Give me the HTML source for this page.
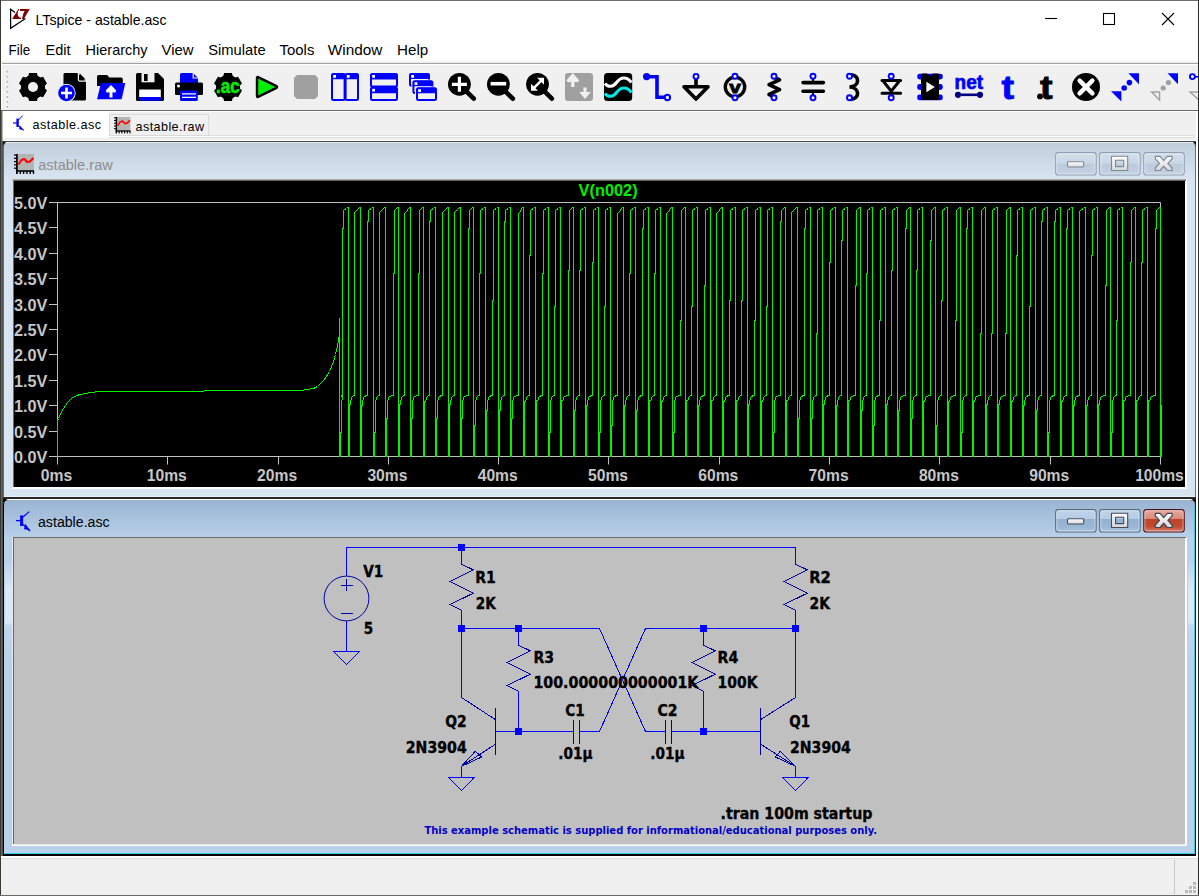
<!DOCTYPE html>
<html>
<head>
<meta charset="utf-8">
<title>LTspice - astable.asc</title>
<style>
html,body{margin:0;padding:0;}
body{width:1199px;height:896px;overflow:hidden;background:#fff;position:relative;font-family:"Liberation Sans",sans-serif;}
#app{position:absolute;left:0;top:0;width:1199px;height:896px;background:#fff;overflow:hidden;}
#app>div{position:absolute;overflow:hidden;}
svg{position:absolute;left:0;top:0;display:block;}
text{font-family:"Liberation Sans",sans-serif;}
.sch text{font-family:"DejaVu Sans Condensed","DejaVu Sans","Liberation Sans",sans-serif;font-weight:bold;fill:#000;}
#titlebar{left:0;top:0;width:1199px;height:37px;background:#fff;}
#menubar{left:0;top:37px;width:1199px;height:26px;background:#fff;}
#toolbar{left:0;top:63px;width:1199px;height:49px;background:#f0f0f0;}
#tabbar{left:0;top:112px;width:1199px;height:29px;background:#f0f0f0;}
#rawwin{left:3px;top:141px;width:1193px;height:357px;}
#ascwin{left:3px;top:499px;width:1193px;height:357px;}
#statusbar{left:0;top:856px;width:1199px;height:40px;background:#f0f0f0;}

</style>
</head>
<body>
<div id="app">
<div id="titlebar">
<svg width="1199" height="37" viewBox="0 0 1199 37">
  <!-- LT logo -->
  <path d="M15 12.4 L10.6 9.3 V28.3 L25.5 18.6" fill="none" stroke="#000" stroke-width="1.25" stroke-linejoin="miter"/>
  <path d="M12.1 18.9 L18.4 9.1 L19.6 9.1 C17.6 11.5 17 13.8 18.2 16 C18.9 17.2 20 17.7 21 17.8 L21 18.9 Z" fill="#800000"/>
  <path d="M20 9 H29.8 L23.8 18.9 H21.9 C22.6 16.6 23 13.6 24.6 10.9 H20 Z" fill="#800000"/>
  <text x="35.5" y="24.6" font-size="15" textLength="131" lengthAdjust="spacingAndGlyphs" fill="#000">LTspice - astable.asc</text>
  <!-- window controls -->
  <path d="M1045 18.5 H1057" stroke="#000" stroke-width="1.1" fill="none"/>
  <rect x="1103.5" y="13.5" width="11" height="11" fill="none" stroke="#000" stroke-width="1.1"/>
  <path d="M1162 13 L1174 25 M1174 13 L1162 25" stroke="#000" stroke-width="1.1" fill="none"/>
</svg>
</div>

<div id="menubar">
<svg width="1199" height="26" viewBox="0 37 1199 26">
  <g font-size="15" fill="#000">
  <text x="8.6" y="55.4" textLength="21.6" lengthAdjust="spacingAndGlyphs">File</text>
  <text x="45.6" y="55.4" textLength="25" lengthAdjust="spacingAndGlyphs">Edit</text>
  <text x="85.6" y="55.4" textLength="62" lengthAdjust="spacingAndGlyphs">Hierarchy</text>
  <text x="161.6" y="55.4" textLength="32" lengthAdjust="spacingAndGlyphs">View</text>
  <text x="208.2" y="55.4" textLength="57.4" lengthAdjust="spacingAndGlyphs">Simulate</text>
  <text x="279.6" y="55.4" textLength="34.8" lengthAdjust="spacingAndGlyphs">Tools</text>
  <text x="327.8" y="55.4" textLength="54.6" lengthAdjust="spacingAndGlyphs">Window</text>
  <text x="397" y="55.4" textLength="31.2" lengthAdjust="spacingAndGlyphs">Help</text>
  </g>
  <rect x="0" y="61" width="1199" height="2" fill="#f0f0f0"/>
</svg>
</div>

<div id="toolbar">
<svg width="1199" height="49" viewBox="0 63 1199 49">
<rect x="0" y="63" width="1199" height="1" fill="#a0a0a0"/>
<rect x="0" y="64" width="1199" height="1" fill="#fff"/>
<rect x="1" y="61" width="1" height="50" fill="#fff"/>
<rect x="0" y="110" width="1199" height="1" fill="#6a6a6a"/>
<rect x="0" y="111" width="1199" height="1" fill="#fff"/>
<rect x="5.4" y="69.9" width="3" height="3" fill="#fafafa"/><rect x="6.4" y="70.7" width="1.8" height="1.8" fill="#b4b4b4"/>
<rect x="5.4" y="75.0" width="3" height="3" fill="#fafafa"/><rect x="6.4" y="75.8" width="1.8" height="1.8" fill="#b4b4b4"/>
<rect x="5.4" y="80.0" width="3" height="3" fill="#fafafa"/><rect x="6.4" y="80.8" width="1.8" height="1.8" fill="#b4b4b4"/>
<rect x="5.4" y="85.1" width="3" height="3" fill="#fafafa"/><rect x="6.4" y="85.9" width="1.8" height="1.8" fill="#b4b4b4"/>
<rect x="5.4" y="90.1" width="3" height="3" fill="#fafafa"/><rect x="6.4" y="90.9" width="1.8" height="1.8" fill="#b4b4b4"/>
<rect x="5.4" y="95.2" width="3" height="3" fill="#fafafa"/><rect x="6.4" y="96.0" width="1.8" height="1.8" fill="#b4b4b4"/>
<rect x="5.4" y="100.2" width="3" height="3" fill="#fafafa"/><rect x="6.4" y="101.0" width="1.8" height="1.8" fill="#b4b4b4"/>
<rect x="5.4" y="105.2" width="3" height="3" fill="#fafafa"/><rect x="6.4" y="106.0" width="1.8" height="1.8" fill="#b4b4b4"/>
<path d="M28.30 75.90 L29.10 73.10 L36.90 73.10 L37.70 75.90 L40.26 77.38 L43.09 76.67 L46.99 83.43 L44.96 85.52 L44.96 88.48 L46.99 90.57 L43.09 97.33 L40.26 96.62 L37.70 98.10 L36.90 100.90 L29.10 100.90 L28.30 98.10 L25.74 96.62 L22.91 97.33 L19.01 90.57 L21.04 88.48 L21.04 85.52 L19.01 83.43 L22.91 76.67 L25.74 77.38 Z" fill="#000"/><circle cx="33" cy="87" r="11.7" fill="#000"/><circle cx="33" cy="87" r="5.0" fill="#f0f0f0"/>
<path d="M65 73 H77.5 L86 81.5 V99 Q86 100.5 84.5 100.5 H65 Q63.5 100.5 63.5 99 V74.5 Q63.5 73 65 73 Z" fill="#000"/>
<path d="M77.8 72.5 V79.5 Q77.8 81.8 80 81.8 H86.5 V80.6 H80 Q79 80.6 79 79.5 V72.5 Z" fill="#f0f0f0"/>
<path d="M79 73 L86 80.6 V72 H79 Z" fill="#f0f0f0"/>
<path d="M79.6 73.3 L85.6 79.6 H80.6 Q79.6 79.6 79.6 78.6 Z" fill="#000"/>
<circle cx="66.5" cy="93" r="9.2" fill="#f0f0f0"/>
<circle cx="66.5" cy="93" r="8.3" fill="#0000ff"/>
<path d="M66.5 87.5 V98.5 M61 93 H72" stroke="#fff" stroke-width="2.6" fill="none"/>
<path d="M98.5 75 H106.5 Q108 75 108.5 76.5 L109 77.5 H121 Q122.8 77.5 122.8 79.3 V86 H97 V76.5 Q97 75 98.5 75 Z" fill="#000"/>
<path d="M101 83 H125.3 L121.6 99.3 H97 Z" fill="#0000ff"/>
<path d="M111 97.5 V91 M106.8 91.6 L111 87.2 L115.2 91.6" stroke="#fff" stroke-width="3" fill="none" stroke-linejoin="miter"/>
<path d="M105.6 92.2 L111 86.4 L116.4 92.2 Z" fill="#fff"/>
<path d="M137.5 73 H158 L164 79 V99.5 Q164 101 162.5 101 H137.5 Q136 101 136 99.5 V74.5 Q136 73 137.5 73 Z" fill="#000"/>
<rect x="141.5" y="72.5" width="13" height="9.8" fill="#f0f0f0"/>
<rect x="144" y="74" width="3.6" height="7" fill="#000"/>
<rect x="139.2" y="89.5" width="21.6" height="8" fill="#fff"/>
<rect x="139.2" y="97" width="21.6" height="3.8" fill="#0000ff"/>
<path d="M181.5 73 H193 L198 78 V83 H180 V74.5 Q180 73 181.5 73 Z" fill="#0000ff"/>
<path d="M192.6 72.6 V78.6 H198.4 V77.6 H193.8 V72.6 Z" fill="#f0f0f0"/>
<path d="M176.5 82.6 H201.5 Q203 82.6 203 84.1 V93.5 Q203 95 201.5 95 H176.5 Q175 95 175 93.5 V84.1 Q175 82.6 176.5 82.6 Z" fill="#000"/>
<circle cx="178.5" cy="86" r="1.5" fill="#fff"/>
<path d="M180 90.5 H197.8 V99.5 Q197.8 101 196.3 101 H181.5 Q180 101 180 99.5 Z" fill="#0000ff"/>
<path d="M182 93.8 H196 M182 97.4 H196" stroke="#fff" stroke-width="1.2"/>
<path d="M223.30 75.90 L224.10 73.10 L231.90 73.10 L232.70 75.90 L235.26 77.38 L238.09 76.67 L241.99 83.43 L239.96 85.52 L239.96 88.48 L241.99 90.57 L238.09 97.33 L235.26 96.62 L232.70 98.10 L231.90 100.90 L224.10 100.90 L223.30 98.10 L220.74 96.62 L217.91 97.33 L214.01 90.57 L216.04 88.48 L216.04 85.52 L214.01 83.43 L217.91 76.67 L220.74 77.38 Z" fill="#000"/><circle cx="228" cy="87" r="11.7" fill="#000"/>
<text x="216" y="92.7" font-size="19.4" font-weight="bold" fill="#00f000" stroke="#00f000" stroke-width="0.5" textLength="23.6" lengthAdjust="spacingAndGlyphs">.ac</text>
<path d="M257 78 L257 96 Q257 97.5 258.5 96.7 L276.5 87.8 Q277.6 87 276.5 86.2 L258.5 77.3 Q257 76.5 257 78 Z" fill="#00ee00" stroke="#000" stroke-width="2.4" stroke-linejoin="round"/>
<path d="M297 75 H315 L318 78 V96 L315 99 H297 L294 96 V78 Z" fill="#a0a0a0"/>
<rect x="332.0" y="74.0" width="12.6" height="26" rx="1.5" fill="#f0f0f0" stroke="#0000ff" stroke-width="2"/><rect x="331.5" y="73.5" width="13.6" height="5.7" rx="1" fill="#0000ff"/><rect x="333.2" y="75" width="2.8" height="2.8" fill="#fff"/>
<rect x="345.6" y="74.0" width="12.4" height="26" rx="1.5" fill="#f0f0f0" stroke="#0000ff" stroke-width="2"/><rect x="345.1" y="73.5" width="13.4" height="5.7" rx="1" fill="#0000ff"/><rect x="346.8" y="75" width="2.8" height="2.8" fill="#fff"/>
<rect x="371.0" y="74.0" width="26" height="12.4" rx="1.5" fill="#f0f0f0" stroke="#0000ff" stroke-width="2"/><rect x="370.5" y="73.5" width="27" height="6.0" rx="1" fill="#0000ff"/><rect x="372.2" y="75" width="2.8" height="2.8" fill="#fff"/>
<rect x="371.0" y="87.8" width="26" height="12.2" rx="1.5" fill="#f0f0f0" stroke="#0000ff" stroke-width="2"/><rect x="370.5" y="87.3" width="27" height="6.0" rx="1" fill="#0000ff"/><rect x="372.2" y="88.8" width="2.8" height="2.8" fill="#fff"/>
<rect x="410.0" y="74.0" width="19" height="11.8" rx="1.5" fill="#f0f0f0" stroke="#0000ff" stroke-width="2"/><rect x="409.5" y="73.5" width="20" height="5.5" rx="1" fill="#0000ff"/><rect x="411.2" y="75" width="2.8" height="2.8" fill="#fff"/>
<rect x="411.5" y="79.6" width="22.6" height="14.6" fill="#f0f0f0"/>
<rect x="413.4" y="81.2" width="19" height="11.8" rx="1.5" fill="#f0f0f0" stroke="#0000ff" stroke-width="2"/><rect x="412.9" y="80.7" width="20" height="5.5" rx="1" fill="#0000ff"/><rect x="414.59999999999997" y="82.2" width="2.8" height="2.8" fill="#fff"/>
<rect x="415" y="86.6" width="22.6" height="14.6" fill="#f0f0f0"/>
<rect x="417.0" y="88.2" width="19" height="11.8" rx="1.5" fill="#f0f0f0" stroke="#0000ff" stroke-width="2"/><rect x="416.5" y="87.7" width="20" height="5.5" rx="1" fill="#0000ff"/><rect x="418.2" y="89.2" width="2.8" height="2.8" fill="#fff"/>
<path d="M466.4 91.3 L473.79999999999995 98.7" stroke="#000" stroke-width="4.6" stroke-linecap="round"/><circle cx="459.4" cy="84.3" r="11.4" fill="#000"/><path d="M451.9 84.3 H466.9 M459.4 76.8 V91.8" stroke="#fff" stroke-width="3.2"/>
<path d="M505.4 91.3 L512.8 98.7" stroke="#000" stroke-width="4.6" stroke-linecap="round"/><circle cx="498.4" cy="84.3" r="11.4" fill="#000"/><path d="M490.59999999999997 83.7 H506.2" stroke="#fff" stroke-width="3.6"/>
<path d="M544.5 91.3 L551.9 98.7" stroke="#000" stroke-width="4.6" stroke-linecap="round"/><circle cx="537.5" cy="84.3" r="11.4" fill="#000"/><path d="M533.5 88.3 L541.5 80.3" stroke="#fff" stroke-width="2.4"/><path d="M537.0 77.8 H544.0 V84.8 Z" fill="#fff"/><path d="M538.0 90.8 H531.0 V83.8 Z" fill="#fff"/>
<rect x="565" y="73" width="28" height="28" rx="3" fill="#a0a0a0"/>
<path d="M572.8 87 V80 M567.5 81.5 L572.8 75.5 L578.2 81.5" stroke="#f0f0f0" stroke-width="3.2" fill="none"/>
<path d="M567 82 L572.8 75 L578.6 82 Z" fill="#f0f0f0"/>
<path d="M585 87.5 V94" stroke="#f0f0f0" stroke-width="3.2" fill="none"/>
<path d="M579.2 92 L585 99 L590.8 92 Z" fill="#f0f0f0"/>
<rect x="604" y="73" width="28.2" height="28" rx="3.5" fill="#000"/>
<path d="M605 83.5 C608 87.5 613 87.5 617 82 C621 76.5 627 76.5 631.5 82.5" stroke="#fff" stroke-width="3" fill="none"/>
<path d="M605 93.5 C608 97.5 613 97.5 617 92 C621 86.5 627 86.5 631.5 92.5" stroke="#00e8e8" stroke-width="3" fill="none"/>
<path d="M646.6 76.8 H657 V97.3 H665" stroke="#0000ff" stroke-width="3.6" fill="none" stroke-linejoin="miter"/>
<circle cx="646.6" cy="76.6" r="3.6" fill="#0000ff"/>
<circle cx="667.4" cy="97.5" r="2.7" fill="#f0f0f0" stroke="#0000ff" stroke-width="2"/>
<path d="M696 79 V86" stroke="#000" stroke-width="3.6"/>
<path d="M684 86.8 H708 L696 99 Z" fill="#f0f0f0" stroke="#000" stroke-width="3.6" stroke-linejoin="round"/>
<circle cx="696" cy="76.4" r="2.5" fill="#f0f0f0" stroke="#0000ff" stroke-width="1.9"/>
<circle cx="735" cy="87" r="9.7" fill="#f0f0f0" stroke="#000" stroke-width="3.4"/>
<text x="729.2" y="92.6" font-size="17" font-weight="bold" fill="#000" stroke="#000" stroke-width="0.9" textLength="11.6" lengthAdjust="spacingAndGlyphs">v</text>
<circle cx="735" cy="76.3" r="2.5" fill="#f0f0f0" stroke="#0000ff" stroke-width="1.9"/>
<circle cx="735" cy="97.8" r="2.5" fill="#f0f0f0" stroke="#0000ff" stroke-width="1.9"/>
<path d="M775 77.6 L779.6 79.8 L769 84.6 L779.6 89.6 L769 94.4 L773 96.6" stroke="#000" stroke-width="3.6" fill="none" stroke-linejoin="round" stroke-linecap="round"/>
<circle cx="774" cy="76.3" r="2.5" fill="#f0f0f0" stroke="#0000ff" stroke-width="1.9"/>
<circle cx="774" cy="97.8" r="2.5" fill="#f0f0f0" stroke="#0000ff" stroke-width="1.9"/>
<path d="M803 82.6 H823.4 M803 91.3 H823.4" stroke="#000" stroke-width="3.6" stroke-linecap="round"/>
<path d="M813 79 V82 M813 92 V95" stroke="#000" stroke-width="2"/>
<circle cx="813" cy="76.3" r="2.5" fill="#f0f0f0" stroke="#0000ff" stroke-width="1.9"/>
<circle cx="813" cy="97.8" r="2.5" fill="#f0f0f0" stroke="#0000ff" stroke-width="1.9"/>
<path d="M851 74.8 C860 75 860 86.6 849.5 87 C860 87.4 860 99 851 99.4" stroke="#000" stroke-width="3.6" fill="none"/>
<circle cx="849.5" cy="76.3" r="2.5" fill="#f0f0f0" stroke="#0000ff" stroke-width="1.9"/>
<circle cx="849.5" cy="97.8" r="2.5" fill="#f0f0f0" stroke="#0000ff" stroke-width="1.9"/>
<path d="M882 80.6 H900.6 M882 93.2 H900.6" stroke="#000" stroke-width="3" stroke-linecap="round"/>
<path d="M883.5 81.5 L891.2 91.2 L899 81.5" stroke="#000" stroke-width="3" fill="none" stroke-linejoin="miter"/>
<circle cx="891.2" cy="76.3" r="2.5" fill="#f0f0f0" stroke="#0000ff" stroke-width="1.9"/>
<circle cx="891.2" cy="97.8" r="2.5" fill="#f0f0f0" stroke="#0000ff" stroke-width="1.9"/>
<rect x="917.2" y="73.69999999999999" width="25.6" height="5.8" rx="2.4" fill="#0000ff"/>
<rect x="917.2" y="84.1" width="25.6" height="5.8" rx="2.4" fill="#0000ff"/>
<rect x="917.2" y="94.5" width="25.6" height="5.8" rx="2.4" fill="#0000ff"/>
<path d="M922.5 73.6 H927 L930 76.2 L933 73.6 H937.5 Q939 73.6 939 75.1 V98.5 Q939 100 937.5 100 H922.5 Q921 100 921 98.5 V75.1 Q921 73.6 922.5 73.6 Z" fill="#000"/>
<path d="M926.4 81.8 L934.8 87 L926.4 92.2 Z" fill="#fff"/>
<text x="954.6" y="89.2" font-size="19.5" font-weight="bold" fill="#0000ff" stroke="#0000ff" stroke-width="0.7" textLength="28.4" lengthAdjust="spacingAndGlyphs">net</text>
<path d="M958 94.8 H980" stroke="#000080" stroke-width="2.6"/>
<circle cx="958" cy="94.8" r="3.1" fill="#000080"/><circle cx="980" cy="94.8" r="3.1" fill="#000080"/>
<text x="1001.6" y="98.8" font-size="33" font-weight="bold" fill="#0000ff" stroke="#0000ff" stroke-width="0.8" textLength="12.6" lengthAdjust="spacingAndGlyphs">t</text>
<text x="1040" y="98.8" font-size="33" font-weight="bold" fill="#000" stroke="#000" stroke-width="0.8" textLength="12.6" lengthAdjust="spacingAndGlyphs">t</text>
<circle cx="1040" cy="96.4" r="2.9" fill="#000"/>
<circle cx="1086" cy="87" r="14" fill="#000"/>
<path d="M1079.6 80.6 L1092.4 93.4 M1092.4 80.6 L1079.6 93.4" stroke="#fff" stroke-width="4.4" stroke-linecap="round"/>
<path d="M1128.4 73.3 H1139 V84.2 Z" fill="#0000ff"/>
<path d="M1111 91.2 H1121.4 V101.4 Z" fill="#0000ff"/>
<circle cx="1129.4" cy="82.6" r="2.8" fill="#0000ff"/><circle cx="1124.2" cy="88" r="2.8" fill="#0000ff"/>
<path d="M1167.6 73.3 H1178 V84.2 Z" fill="#0000ff"/>
<path d="M1151.6 92 H1159.6 V100 Z" fill="#f0f0f0" stroke="#a0a0a0" stroke-width="1.4"/>
<circle cx="1168.4" cy="82.6" r="2.6" fill="#a0a0a0"/><circle cx="1163.2" cy="88" r="2.6" fill="#a0a0a0"/>
<path d="M1195 76.8 H1199" stroke="#0000ff" stroke-width="1.6"/>
<circle cx="1192.4" cy="76.6" r="2.5" fill="#f0f0f0" stroke="#0000ff" stroke-width="1.9"/>
<path d="M1190 92 H1199 V100 Z" fill="#f0f0f0" stroke="#a0a0a0" stroke-width="1.4"/>
</svg>
</div>
<div id="tabbar">
<svg width="1199" height="29" viewBox="0 112 1199 29">
  <rect x="0" y="112" width="1199" height="29" fill="#f0f0f0"/>
  <!-- strip below tabs -->
  <rect x="3" y="135" width="1191" height="3" fill="#dcdcdc"/>
  <rect x="4" y="136" width="1189" height="1" fill="#ffffff"/>
  <rect x="2" y="140" width="1195" height="1" fill="#ffffff"/>
  <!-- selected tab -->
  <rect x="3" y="112" width="106.5" height="26" fill="#ffffff"/>
  <g stroke="#0000ff" fill="none">
    <path d="M13 123 H17" stroke-width="1.2"/>
    <path d="M17.6 118.6 V127" stroke-width="2.4"/>
    <path d="M18.6 120 L22.6 115.6" stroke-width="1"/>
    <path d="M18.6 125.6 L23.6 130.6" stroke-width="1"/>
    <path d="M20 126.6 L22.6 129.4 L19.8 128.8 Z" fill="#0000ff" stroke-width="1.1"/>
  </g>
  <text x="32.6" y="128.5" font-size="12.6" fill="#000" textLength="68.4" lengthAdjust="spacing">astable.asc</text>
  <!-- unselected tab -->
  <rect x="109.5" y="114.5" width="99" height="21" fill="#f0f0f0" stroke="#d9d9d9" stroke-width="1"/>
  <g transform="translate(114 117) scale(0.82)">
    <rect x="3.5" y="0" width="16.5" height="16.5" fill="#b4b4b4"/>
    <rect x="2" y="0" width="1.8" height="20" fill="#000"/>
    <rect x="2" y="16.2" width="18" height="1.6" fill="#000"/>
    <rect x="0" y="0.4" width="2.5" height="1.2" fill="#000"/><rect x="0" y="3.7" width="2.5" height="1.2" fill="#000"/><rect x="0" y="7" width="2.5" height="1.2" fill="#000"/><rect x="0" y="10.3" width="2.5" height="1.2" fill="#000"/><rect x="0" y="13.6" width="2.5" height="1.2" fill="#000"/>
    <rect x="5.6" y="17" width="1.4" height="3" fill="#000"/><rect x="8.9" y="17" width="1.4" height="3" fill="#000"/><rect x="12.2" y="17" width="1.4" height="3" fill="#000"/><rect x="15.5" y="17" width="1.4" height="3" fill="#000"/><rect x="18.8" y="17" width="1.4" height="3" fill="#000"/>
    <path d="M4.5 10.5 L7.5 6 L10.5 5 L13 8 L16 7.5 L19.5 4" stroke="#ff0000" stroke-width="2" fill="none" stroke-linejoin="round"/>
  </g>
  <text x="135.6" y="130.5" font-size="12.6" fill="#000" textLength="68.4" lengthAdjust="spacing">astable.raw</text>
</svg>
</div>

<div id="rawwin">
<svg width="1193" height="357" viewBox="3 141 1193 357">
<defs>
<linearGradient id="gInact" gradientUnits="userSpaceOnUse" x1="0" y1="142" x2="0" y2="180"><stop offset="0" stop-color="#bfcddb"/><stop offset="1" stop-color="#d9e5f3"/></linearGradient>
<linearGradient id="gBtnI" x1="0" y1="0" x2="0" y2="1"><stop offset="0" stop-color="#d3dfec"/><stop offset="0.48" stop-color="#c9d6e5"/><stop offset="0.5" stop-color="#bccbdc"/><stop offset="1" stop-color="#c3d1e1"/></linearGradient>
<linearGradient id="gGlyph" x1="0" y1="0" x2="0" y2="1"><stop offset="0" stop-color="#ffffff"/><stop offset="1" stop-color="#d8d8d8"/></linearGradient>
</defs>
<rect x="3" y="141" width="1193" height="357" fill="#d7e4f2"/>
<path d="M3.5 498 V147 Q3.5 141.5 9 141.5 H1190 Q1195.5 141.5 1195.5 147 V498" fill="url(#gInact)" stroke="none"/>
<rect x="3" y="180" width="1193" height="318" fill="#d7e4f2"/>
<path d="M3.5 497.5 V147 Q3.5 141.5 9 141.5 H1190 Q1195.5 141.5 1195.5 147 V497.5 Z" fill="none" stroke="#6d6d6d" stroke-width="1"/>
<rect x="6" y="142" width="1187" height="1" fill="#e6ecf5"/>
<rect x="4" y="496" width="1191" height="1" fill="#eef3fa"/>
<rect x="3" y="141" width="1193" height="1" fill="#4a4a4a"/>
<rect x="3" y="497" width="1193" height="1" fill="#262626"/>
<path d="M3 141 H8 Q3.5 142 3 147 Z" fill="#000"/><path d="M1196 141 H1191 Q1195.5 142 1196 147 Z" fill="#000"/>
<g transform="translate(14 154) scale(1.0)"><rect x="3.5" y="0" width="16.5" height="16.5" fill="#b4b4b4"/><rect x="2" y="0" width="1.8" height="20" fill="#000"/><rect x="2" y="16.2" width="18" height="1.6" fill="#000"/><rect x="0" y="0.4" width="2.5" height="1.2" fill="#000"/><rect x="0" y="3.7" width="2.5" height="1.2" fill="#000"/><rect x="0" y="7.0" width="2.5" height="1.2" fill="#000"/><rect x="0" y="10.3" width="2.5" height="1.2" fill="#000"/><rect x="0" y="13.6" width="2.5" height="1.2" fill="#000"/><rect x="5.6" y="17" width="1.4" height="3" fill="#000"/><rect x="8.9" y="17" width="1.4" height="3" fill="#000"/><rect x="12.2" y="17" width="1.4" height="3" fill="#000"/><rect x="15.5" y="17" width="1.4" height="3" fill="#000"/><rect x="18.8" y="17" width="1.4" height="3" fill="#000"/><path d="M4.5 10.5 L7.5 6 L10.5 5 L13 8 L16 7.5 L19.5 4" stroke="#ff0000" stroke-width="2" fill="none" stroke-linejoin="round"/></g>
<text x="38.2" y="170" font-size="15.4" fill="#8e8e8e" textLength="74.6" lengthAdjust="spacingAndGlyphs">astable.raw</text>
<rect x="1055.7" y="152.6" width="40.4" height="22.4" rx="2.6" fill="url(#gBtnI)" stroke="#8e9db2" stroke-width="1.1"/><rect x="1056.8" y="153.7" width="38.199999999999996" height="20.2" rx="1.6" fill="none" stroke="#ffffff" stroke-opacity="0.5" stroke-width="1"/><rect x="1067.50" y="161.70" width="16.2" height="5.3" rx="0.9" fill="url(#gGlyph)" stroke="#7d8898" stroke-width="1.1"/>
<rect x="1099.7" y="152.6" width="40.4" height="22.4" rx="2.6" fill="url(#gBtnI)" stroke="#8e9db2" stroke-width="1.1"/><rect x="1100.8" y="153.7" width="38.199999999999996" height="20.2" rx="1.6" fill="none" stroke="#ffffff" stroke-opacity="0.5" stroke-width="1"/><path d="M1111.50 156.30 H1127.70 V170.50 H1111.50 Z M1115.50 160.20 V166.60 H1123.70 V160.20 Z" fill="url(#gGlyph)" fill-rule="evenodd" stroke="#7d8898" stroke-width="1.1" stroke-linejoin="round"/>
<rect x="1143.8" y="152.6" width="40.4" height="22.4" rx="2.6" fill="url(#gBtnI)" stroke="#8e9db2" stroke-width="1.1"/><rect x="1144.8999999999999" y="153.7" width="38.199999999999996" height="20.2" rx="1.6" fill="none" stroke="#ffffff" stroke-opacity="0.5" stroke-width="1"/><path d="M1155.30 156.30 L1160.10 156.30 L1163.70 160.60 L1167.30 156.30 L1172.10 156.30 L1172.10 158.80 L1167.90 163.40 L1172.10 168.00 L1172.10 170.50 L1167.30 170.50 L1163.70 166.20 L1160.10 170.50 L1155.30 170.50 L1155.30 168.00 L1159.50 163.40 L1155.30 158.80 Z" fill="url(#gGlyph)" stroke="#7d8898" stroke-width="1.2" stroke-linejoin="round"/>
<rect x="12" y="179" width="1175" height="310" fill="#ffffff"/>
<rect x="12" y="179" width="1174" height="1" fill="#a9a9a9"/>
<rect x="12" y="180" width="1174" height="1" fill="#646464"/>
<rect x="12" y="180" width="1" height="308" fill="#dfe3e8"/>
<rect x="13" y="180" width="1" height="307" fill="#6a6a6a"/>
<rect x="14" y="181" width="1171" height="306" fill="#000"/>
<path d="M49 202.5 H1160.5 V464.5" stroke="#c0c0c0" stroke-width="1" fill="none"/>
<path d="M57.5 202.5 V464.5 M49 456.5 H1160.5" stroke="#c0c0c0" stroke-width="1" fill="none"/>
<path d="M49 431.5 H57.5" stroke="#c0c0c0" stroke-width="1"/>
<path d="M49 405.5 H57.5" stroke="#c0c0c0" stroke-width="1"/>
<path d="M49 380.5 H57.5" stroke="#c0c0c0" stroke-width="1"/>
<path d="M49 354.5 H57.5" stroke="#c0c0c0" stroke-width="1"/>
<path d="M49 329.5 H57.5" stroke="#c0c0c0" stroke-width="1"/>
<path d="M49 304.5 H57.5" stroke="#c0c0c0" stroke-width="1"/>
<path d="M49 278.5 H57.5" stroke="#c0c0c0" stroke-width="1"/>
<path d="M49 253.5 H57.5" stroke="#c0c0c0" stroke-width="1"/>
<path d="M49 227.5 H57.5" stroke="#c0c0c0" stroke-width="1"/>
<path d="M167.5 456.5 V464.5" stroke="#c0c0c0" stroke-width="1"/>
<path d="M278.5 456.5 V464.5" stroke="#c0c0c0" stroke-width="1"/>
<path d="M388.5 456.5 V464.5" stroke="#c0c0c0" stroke-width="1"/>
<path d="M498.5 456.5 V464.5" stroke="#c0c0c0" stroke-width="1"/>
<path d="M608.5 456.5 V464.5" stroke="#c0c0c0" stroke-width="1"/>
<path d="M719.5 456.5 V464.5" stroke="#c0c0c0" stroke-width="1"/>
<path d="M829.5 456.5 V464.5" stroke="#c0c0c0" stroke-width="1"/>
<path d="M939.5 456.5 V464.5" stroke="#c0c0c0" stroke-width="1"/>
<path d="M1050.5 456.5 V464.5" stroke="#c0c0c0" stroke-width="1"/>
<g font-size="16" font-weight="bold" fill="#c6c6c6">
<text x="14" y="463.0" textLength="33.4" lengthAdjust="spacingAndGlyphs">0.0V</text>
<text x="14" y="437.6" textLength="33.4" lengthAdjust="spacingAndGlyphs">0.5V</text>
<text x="14" y="412.2" textLength="33.4" lengthAdjust="spacingAndGlyphs">1.0V</text>
<text x="14" y="386.8" textLength="33.4" lengthAdjust="spacingAndGlyphs">1.5V</text>
<text x="14" y="361.4" textLength="33.4" lengthAdjust="spacingAndGlyphs">2.0V</text>
<text x="14" y="336.0" textLength="33.4" lengthAdjust="spacingAndGlyphs">2.5V</text>
<text x="14" y="310.6" textLength="33.4" lengthAdjust="spacingAndGlyphs">3.0V</text>
<text x="14" y="285.2" textLength="33.4" lengthAdjust="spacingAndGlyphs">3.5V</text>
<text x="14" y="259.8" textLength="33.4" lengthAdjust="spacingAndGlyphs">4.0V</text>
<text x="14" y="234.4" textLength="33.4" lengthAdjust="spacingAndGlyphs">4.5V</text>
<text x="14" y="209.0" textLength="33.4" lengthAdjust="spacingAndGlyphs">5.0V</text>
<text x="40.8" y="481.2" textLength="31.4" lengthAdjust="spacingAndGlyphs">0ms</text>
<text x="146.8" y="481.2" textLength="40" lengthAdjust="spacingAndGlyphs">10ms</text>
<text x="257.1" y="481.2" textLength="40" lengthAdjust="spacingAndGlyphs">20ms</text>
<text x="367.4" y="481.2" textLength="40" lengthAdjust="spacingAndGlyphs">30ms</text>
<text x="477.7" y="481.2" textLength="40" lengthAdjust="spacingAndGlyphs">40ms</text>
<text x="588.0" y="481.2" textLength="40" lengthAdjust="spacingAndGlyphs">50ms</text>
<text x="698.3" y="481.2" textLength="40" lengthAdjust="spacingAndGlyphs">60ms</text>
<text x="808.6" y="481.2" textLength="40" lengthAdjust="spacingAndGlyphs">70ms</text>
<text x="918.9" y="481.2" textLength="40" lengthAdjust="spacingAndGlyphs">80ms</text>
<text x="1029.2" y="481.2" textLength="40" lengthAdjust="spacingAndGlyphs">90ms</text>
<text x="1135.2" y="481.2" textLength="48.6" lengthAdjust="spacingAndGlyphs">100ms</text>
</g>
<text x="578.6" y="195.6" font-size="16" font-weight="bold" fill="#00f000" textLength="59" lengthAdjust="spacingAndGlyphs">V(n002)</text>
<path d="M57.5 456.5 L57.5 420.5 L58.5 418.5 L60.5 413.5 L63.5 408.5 L67.5 402.5 L71.5 398.5 L76.5 395.5 L80.5 394.5 L85.5 393.5 L90.5 392.5 L100.5 391.5 L110.5 391.5 L300.5 390.5 L307.5 389.5 L313.5 388.5 L317.5 386.5 L320.5 383.5 L323.5 380.5 L326.5 376.5 L329.5 371.5 L331.5 366.5 L333.5 361.5 L335.5 354.5 L337.5 346.5 L338.5 340.5 L339.5 333.5 L339.5 317.5 L339.5 456.5 L340.5 456.5 L340.5 432.5 L341.5 432.5 L341.5 400.5 L342.5 399.5 L342.5 397.5 L341.5 395.5 L342.5 395.5 L342.5 228.5 L343.5 228.5 L343.5 210.5 L344.5 209.5 L346.5 208.5 L347.5 207.5 L348.5 207.5 L348.5 456.5 L349.5 456.5 L349.5 404.5 L350.5 404.5 L350.5 400.5 L351.5 399.5 L351.5 397.5 L352.5 396.5 L353.5 395.5 L354.5 395.5 L354.5 212.5 L355.5 211.5 L356.5 210.5 L358.5 208.5 L359.5 207.5 L360.5 207.5 L360.5 456.5 L361.5 456.5 L361.5 405.5 L362.5 405.5 L362.5 400.5 L363.5 399.5 L363.5 397.5 L364.5 396.5 L366.5 395.5 L367.5 395.5 L367.5 221.5 L368.5 221.5 L368.5 210.5 L369.5 209.5 L371.5 208.5 L372.5 207.5 L373.5 207.5 L373.5 456.5 L374.5 456.5 L374.5 432.5 L375.5 432.5 L375.5 400.5 L376.5 399.5 L376.5 397.5 L377.5 396.5 L378.5 395.5 L379.5 395.5 L379.5 212.5 L380.5 211.5 L381.5 210.5 L383.5 208.5 L384.5 207.5 L385.5 207.5 L385.5 456.5 L386.5 456.5 L386.5 418.5 L387.5 418.5 L387.5 400.5 L388.5 399.5 L388.5 397.5 L389.5 396.5 L392.5 395.5 L393.5 395.5 L393.5 273.5 L394.5 273.5 L394.5 210.5 L395.5 209.5 L396.5 208.5 L397.5 207.5 L398.5 207.5 L398.5 456.5 L399.5 456.5 L399.5 404.5 L400.5 404.5 L400.5 400.5 L401.5 399.5 L401.5 397.5 L402.5 396.5 L403.5 395.5 L404.5 395.5 L404.5 213.5 L405.5 212.5 L406.5 211.5 L408.5 208.5 L409.5 207.5 L410.5 207.5 L410.5 456.5 L411.5 456.5 L411.5 418.5 L412.5 418.5 L412.5 400.5 L413.5 399.5 L413.5 397.5 L414.5 396.5 L417.5 395.5 L418.5 395.5 L418.5 273.5 L419.5 273.5 L419.5 210.5 L420.5 209.5 L421.5 208.5 L422.5 207.5 L423.5 207.5 L423.5 456.5 L424.5 456.5 L424.5 401.5 L425.5 401.5 L425.5 400.5 L426.5 399.5 L426.5 397.5 L427.5 396.5 L428.5 395.5 L429.5 395.5 L429.5 221.5 L430.5 221.5 L430.5 210.5 L431.5 209.5 L433.5 208.5 L434.5 207.5 L435.5 207.5 L435.5 456.5 L436.5 456.5 L436.5 418.5 L437.5 418.5 L437.5 400.5 L438.5 399.5 L438.5 397.5 L439.5 396.5 L441.5 395.5 L442.5 395.5 L442.5 212.5 L443.5 211.5 L444.5 210.5 L446.5 208.5 L447.5 207.5 L448.5 207.5 L448.5 456.5 L449.5 456.5 L449.5 404.5 L450.5 404.5 L450.5 400.5 L451.5 399.5 L451.5 397.5 L452.5 396.5 L453.5 395.5 L454.5 395.5 L454.5 212.5 L455.5 211.5 L456.5 210.5 L458.5 208.5 L459.5 207.5 L460.5 207.5 L460.5 456.5 L461.5 456.5 L461.5 418.5 L462.5 418.5 L462.5 400.5 L463.5 399.5 L463.5 397.5 L464.5 396.5 L467.5 395.5 L468.5 395.5 L468.5 228.5 L469.5 228.5 L469.5 210.5 L470.5 209.5 L471.5 208.5 L472.5 207.5 L473.5 207.5 L473.5 456.5 L474.5 456.5 L474.5 425.5 L475.5 425.5 L475.5 400.5 L476.5 399.5 L476.5 397.5 L477.5 396.5 L478.5 395.5 L479.5 395.5 L479.5 273.5 L480.5 273.5 L480.5 210.5 L481.5 209.5 L483.5 208.5 L484.5 207.5 L485.5 207.5 L485.5 456.5 L486.5 456.5 L486.5 410.5 L487.5 410.5 L487.5 400.5 L488.5 399.5 L488.5 397.5 L489.5 396.5 L491.5 395.5 L492.5 395.5 L492.5 300.5 L493.5 300.5 L493.5 210.5 L494.5 209.5 L496.5 208.5 L497.5 207.5 L498.5 207.5 L498.5 456.5 L499.5 456.5 L499.5 410.5 L500.5 410.5 L500.5 400.5 L501.5 399.5 L501.5 397.5 L502.5 396.5 L503.5 395.5 L504.5 395.5 L504.5 221.5 L505.5 221.5 L505.5 210.5 L506.5 209.5 L508.5 208.5 L509.5 207.5 L510.5 207.5 L510.5 456.5 L511.5 456.5 L511.5 418.5 L512.5 418.5 L512.5 400.5 L513.5 399.5 L513.5 397.5 L514.5 396.5 L517.5 395.5 L518.5 395.5 L518.5 213.5 L519.5 212.5 L520.5 211.5 L521.5 208.5 L522.5 207.5 L523.5 207.5 L523.5 456.5 L524.5 456.5 L524.5 401.5 L525.5 401.5 L525.5 400.5 L526.5 399.5 L526.5 397.5 L527.5 396.5 L528.5 395.5 L529.5 395.5 L529.5 255.5 L530.5 255.5 L530.5 210.5 L531.5 209.5 L533.5 208.5 L534.5 207.5 L535.5 207.5 L535.5 456.5 L536.5 456.5 L536.5 400.5 L537.5 400.5 L537.5 400.5 L538.5 399.5 L538.5 397.5 L539.5 396.5 L541.5 395.5 L542.5 395.5 L542.5 273.5 L543.5 273.5 L543.5 210.5 L544.5 209.5 L546.5 208.5 L547.5 207.5 L548.5 207.5 L548.5 456.5 L549.5 456.5 L549.5 432.5 L550.5 432.5 L550.5 400.5 L551.5 399.5 L551.5 397.5 L552.5 396.5 L553.5 395.5 L554.5 395.5 L554.5 306.5 L555.5 306.5 L555.5 210.5 L556.5 209.5 L558.5 208.5 L559.5 207.5 L560.5 207.5 L560.5 456.5 L561.5 456.5 L561.5 400.5 L562.5 400.5 L562.5 400.5 L563.5 399.5 L563.5 397.5 L564.5 396.5 L567.5 395.5 L568.5 395.5 L568.5 270.5 L569.5 270.5 L569.5 210.5 L570.5 209.5 L571.5 208.5 L572.5 207.5 L573.5 207.5 L573.5 456.5 L574.5 456.5 L574.5 410.5 L575.5 410.5 L575.5 400.5 L576.5 399.5 L576.5 397.5 L577.5 396.5 L578.5 395.5 L579.5 395.5 L579.5 270.5 L580.5 270.5 L580.5 210.5 L581.5 209.5 L583.5 208.5 L584.5 207.5 L585.5 207.5 L585.5 456.5 L586.5 456.5 L586.5 405.5 L587.5 405.5 L587.5 400.5 L588.5 399.5 L588.5 397.5 L589.5 396.5 L591.5 395.5 L592.5 395.5 L592.5 262.5 L593.5 262.5 L593.5 210.5 L594.5 209.5 L596.5 208.5 L597.5 207.5 L598.5 207.5 L598.5 456.5 L599.5 456.5 L599.5 432.5 L600.5 432.5 L600.5 400.5 L601.5 399.5 L601.5 397.5 L602.5 396.5 L603.5 395.5 L604.5 395.5 L604.5 306.5 L605.5 306.5 L605.5 210.5 L606.5 209.5 L608.5 208.5 L609.5 207.5 L610.5 207.5 L610.5 456.5 L611.5 456.5 L611.5 425.5 L612.5 425.5 L612.5 400.5 L613.5 399.5 L613.5 397.5 L614.5 396.5 L616.5 395.5 L617.5 395.5 L617.5 213.5 L618.5 212.5 L619.5 211.5 L621.5 208.5 L622.5 207.5 L623.5 207.5 L623.5 456.5 L624.5 456.5 L624.5 405.5 L625.5 405.5 L625.5 400.5 L626.5 399.5 L626.5 397.5 L627.5 396.5 L628.5 395.5 L629.5 395.5 L629.5 273.5 L630.5 273.5 L630.5 210.5 L631.5 209.5 L633.5 208.5 L634.5 207.5 L635.5 207.5 L635.5 456.5 L636.5 456.5 L636.5 410.5 L637.5 410.5 L637.5 400.5 L638.5 399.5 L638.5 397.5 L639.5 396.5 L641.5 395.5 L642.5 395.5 L642.5 228.5 L643.5 228.5 L643.5 210.5 L644.5 209.5 L646.5 208.5 L647.5 207.5 L648.5 207.5 L648.5 456.5 L649.5 456.5 L649.5 400.5 L650.5 400.5 L650.5 400.5 L651.5 399.5 L651.5 397.5 L652.5 396.5 L653.5 395.5 L654.5 395.5 L654.5 273.5 L655.5 273.5 L655.5 210.5 L656.5 209.5 L658.5 208.5 L659.5 207.5 L660.5 207.5 L660.5 456.5 L661.5 456.5 L661.5 401.5 L662.5 401.5 L662.5 400.5 L663.5 399.5 L663.5 397.5 L664.5 396.5 L665.5 395.5 L666.5 395.5 L666.5 213.5 L667.5 212.5 L668.5 211.5 L670.5 208.5 L671.5 207.5 L672.5 207.5 L672.5 456.5 L673.5 456.5 L673.5 432.5 L674.5 432.5 L674.5 400.5 L675.5 399.5 L675.5 397.5 L676.5 396.5 L679.5 395.5 L680.5 395.5 L680.5 320.5 L681.5 320.5 L681.5 210.5 L682.5 209.5 L683.5 208.5 L684.5 207.5 L685.5 207.5 L685.5 456.5 L686.5 456.5 L686.5 400.5 L687.5 400.5 L687.5 400.5 L688.5 399.5 L688.5 397.5 L689.5 396.5 L690.5 395.5 L691.5 395.5 L691.5 306.5 L692.5 306.5 L692.5 210.5 L693.5 209.5 L695.5 208.5 L696.5 207.5 L697.5 207.5 L697.5 456.5 L698.5 456.5 L698.5 405.5 L699.5 405.5 L699.5 400.5 L700.5 399.5 L700.5 397.5 L701.5 396.5 L703.5 395.5 L704.5 395.5 L704.5 285.5 L705.5 285.5 L705.5 210.5 L706.5 209.5 L708.5 208.5 L709.5 207.5 L710.5 207.5 L710.5 456.5 L711.5 456.5 L711.5 400.5 L712.5 400.5 L712.5 400.5 L713.5 399.5 L713.5 397.5 L714.5 396.5 L715.5 395.5 L716.5 395.5 L716.5 213.5 L717.5 212.5 L718.5 211.5 L720.5 208.5 L721.5 207.5 L722.5 207.5 L722.5 456.5 L723.5 456.5 L723.5 401.5 L724.5 401.5 L724.5 400.5 L725.5 399.5 L725.5 397.5 L726.5 396.5 L728.5 395.5 L729.5 395.5 L729.5 300.5 L730.5 300.5 L730.5 210.5 L731.5 209.5 L733.5 208.5 L734.5 207.5 L735.5 207.5 L735.5 456.5 L736.5 456.5 L736.5 400.5 L737.5 400.5 L737.5 400.5 L738.5 399.5 L738.5 397.5 L739.5 396.5 L740.5 395.5 L741.5 395.5 L741.5 300.5 L742.5 300.5 L742.5 210.5 L743.5 209.5 L745.5 208.5 L746.5 207.5 L747.5 207.5 L747.5 456.5 L748.5 456.5 L748.5 404.5 L749.5 404.5 L749.5 400.5 L750.5 399.5 L750.5 397.5 L751.5 396.5 L753.5 395.5 L754.5 395.5 L754.5 320.5 L755.5 320.5 L755.5 210.5 L756.5 209.5 L758.5 208.5 L759.5 207.5 L760.5 207.5 L760.5 456.5 L761.5 456.5 L761.5 401.5 L762.5 401.5 L762.5 400.5 L763.5 399.5 L763.5 397.5 L764.5 396.5 L765.5 395.5 L766.5 395.5 L766.5 306.5 L767.5 306.5 L767.5 210.5 L768.5 209.5 L770.5 208.5 L771.5 207.5 L772.5 207.5 L772.5 456.5 L773.5 456.5 L773.5 432.5 L774.5 432.5 L774.5 400.5 L775.5 399.5 L775.5 397.5 L776.5 396.5 L779.5 395.5 L780.5 395.5 L780.5 221.5 L781.5 221.5 L781.5 210.5 L782.5 209.5 L783.5 208.5 L784.5 207.5 L785.5 207.5 L785.5 456.5 L786.5 456.5 L786.5 400.5 L787.5 400.5 L787.5 400.5 L788.5 399.5 L788.5 397.5 L789.5 396.5 L790.5 395.5 L791.5 395.5 L791.5 212.5 L792.5 211.5 L793.5 210.5 L795.5 208.5 L796.5 207.5 L797.5 207.5 L797.5 456.5 L798.5 456.5 L798.5 418.5 L799.5 418.5 L799.5 400.5 L800.5 399.5 L800.5 397.5 L801.5 396.5 L803.5 395.5 L804.5 395.5 L804.5 228.5 L805.5 228.5 L805.5 210.5 L806.5 209.5 L808.5 208.5 L809.5 207.5 L810.5 207.5 L810.5 456.5 L811.5 456.5 L811.5 418.5 L812.5 418.5 L812.5 400.5 L813.5 399.5 L813.5 397.5 L814.5 396.5 L815.5 395.5 L816.5 395.5 L816.5 333.5 L817.5 333.5 L817.5 210.5 L818.5 209.5 L820.5 208.5 L821.5 207.5 L822.5 207.5 L822.5 456.5 L823.5 456.5 L823.5 404.5 L824.5 404.5 L824.5 400.5 L825.5 399.5 L825.5 397.5 L826.5 396.5 L828.5 395.5 L829.5 395.5 L829.5 262.5 L830.5 262.5 L830.5 210.5 L831.5 209.5 L833.5 208.5 L834.5 207.5 L835.5 207.5 L835.5 456.5 L836.5 456.5 L836.5 405.5 L837.5 405.5 L837.5 400.5 L838.5 399.5 L838.5 397.5 L839.5 396.5 L840.5 395.5 L841.5 395.5 L841.5 240.5 L842.5 240.5 L842.5 210.5 L843.5 209.5 L845.5 208.5 L846.5 207.5 L847.5 207.5 L847.5 456.5 L848.5 456.5 L848.5 400.5 L849.5 400.5 L849.5 400.5 L850.5 399.5 L850.5 397.5 L851.5 396.5 L854.5 395.5 L855.5 395.5 L855.5 285.5 L856.5 285.5 L856.5 210.5 L857.5 209.5 L858.5 208.5 L859.5 207.5 L860.5 207.5 L860.5 456.5 L861.5 456.5 L861.5 410.5 L862.5 410.5 L862.5 400.5 L863.5 399.5 L863.5 397.5 L864.5 396.5 L865.5 395.5 L866.5 395.5 L866.5 273.5 L867.5 273.5 L867.5 210.5 L868.5 209.5 L870.5 208.5 L871.5 207.5 L872.5 207.5 L872.5 456.5 L873.5 456.5 L873.5 425.5 L874.5 425.5 L874.5 400.5 L875.5 399.5 L875.5 397.5 L876.5 396.5 L878.5 395.5 L879.5 395.5 L879.5 320.5 L880.5 320.5 L880.5 210.5 L881.5 209.5 L883.5 208.5 L884.5 207.5 L885.5 207.5 L885.5 456.5 L886.5 456.5 L886.5 404.5 L887.5 404.5 L887.5 400.5 L888.5 399.5 L888.5 397.5 L889.5 396.5 L890.5 395.5 L891.5 395.5 L891.5 270.5 L892.5 270.5 L892.5 210.5 L893.5 209.5 L895.5 208.5 L896.5 207.5 L897.5 207.5 L897.5 456.5 L898.5 456.5 L898.5 410.5 L899.5 410.5 L899.5 400.5 L900.5 399.5 L900.5 397.5 L901.5 396.5 L904.5 395.5 L905.5 395.5 L905.5 228.5 L906.5 228.5 L906.5 210.5 L907.5 209.5 L908.5 208.5 L909.5 207.5 L910.5 207.5 L910.5 456.5 L911.5 456.5 L911.5 418.5 L912.5 418.5 L912.5 400.5 L913.5 399.5 L913.5 397.5 L914.5 396.5 L915.5 395.5 L916.5 395.5 L916.5 270.5 L917.5 270.5 L917.5 210.5 L918.5 209.5 L920.5 208.5 L921.5 207.5 L922.5 207.5 L922.5 456.5 L923.5 456.5 L923.5 401.5 L924.5 401.5 L924.5 400.5 L925.5 399.5 L925.5 397.5 L926.5 396.5 L929.5 395.5 L930.5 395.5 L930.5 240.5 L931.5 240.5 L931.5 210.5 L932.5 209.5 L933.5 208.5 L934.5 207.5 L935.5 207.5 L935.5 456.5 L936.5 456.5 L936.5 425.5 L937.5 425.5 L937.5 400.5 L938.5 399.5 L938.5 397.5 L939.5 396.5 L940.5 395.5 L941.5 395.5 L941.5 300.5 L942.5 300.5 L942.5 210.5 L943.5 209.5 L945.5 208.5 L946.5 207.5 L947.5 207.5 L947.5 456.5 L948.5 456.5 L948.5 401.5 L949.5 401.5 L949.5 400.5 L950.5 399.5 L950.5 397.5 L951.5 396.5 L954.5 395.5 L955.5 395.5 L955.5 320.5 L956.5 320.5 L956.5 210.5 L957.5 209.5 L958.5 208.5 L959.5 207.5 L960.5 207.5 L960.5 456.5 L961.5 456.5 L961.5 432.5 L962.5 432.5 L962.5 400.5 L963.5 399.5 L963.5 397.5 L964.5 396.5 L965.5 395.5 L966.5 395.5 L966.5 228.5 L967.5 228.5 L967.5 210.5 L968.5 209.5 L970.5 208.5 L971.5 207.5 L972.5 207.5 L972.5 456.5 L973.5 456.5 L973.5 401.5 L974.5 401.5 L974.5 400.5 L975.5 399.5 L975.5 397.5 L976.5 396.5 L979.5 395.5 L980.5 395.5 L980.5 333.5 L981.5 333.5 L981.5 210.5 L982.5 209.5 L983.5 208.5 L984.5 207.5 L985.5 207.5 L985.5 456.5 L986.5 456.5 L986.5 404.5 L987.5 404.5 L987.5 400.5 L988.5 399.5 L988.5 397.5 L989.5 396.5 L990.5 395.5 L991.5 395.5 L991.5 333.5 L992.5 333.5 L992.5 210.5 L993.5 209.5 L995.5 208.5 L996.5 207.5 L997.5 207.5 L997.5 456.5 L998.5 456.5 L998.5 404.5 L999.5 404.5 L999.5 400.5 L1000.5 399.5 L1000.5 397.5 L1001.5 396.5 L1004.5 395.5 L1005.5 395.5 L1005.5 333.5 L1006.5 333.5 L1006.5 210.5 L1007.5 209.5 L1008.5 208.5 L1009.5 207.5 L1010.5 207.5 L1010.5 456.5 L1011.5 456.5 L1011.5 401.5 L1012.5 401.5 L1012.5 400.5 L1013.5 399.5 L1013.5 397.5 L1014.5 396.5 L1015.5 395.5 L1016.5 395.5 L1016.5 255.5 L1017.5 255.5 L1017.5 210.5 L1018.5 209.5 L1020.5 208.5 L1021.5 207.5 L1022.5 207.5 L1022.5 456.5 L1023.5 456.5 L1023.5 405.5 L1024.5 405.5 L1024.5 400.5 L1025.5 399.5 L1025.5 397.5 L1026.5 396.5 L1028.5 395.5 L1029.5 395.5 L1029.5 306.5 L1030.5 306.5 L1030.5 210.5 L1031.5 209.5 L1033.5 208.5 L1034.5 207.5 L1035.5 207.5 L1035.5 456.5 L1036.5 456.5 L1036.5 410.5 L1037.5 410.5 L1037.5 400.5 L1038.5 399.5 L1038.5 397.5 L1039.5 396.5 L1040.5 395.5 L1041.5 395.5 L1041.5 221.5 L1042.5 221.5 L1042.5 210.5 L1043.5 209.5 L1045.5 208.5 L1046.5 207.5 L1047.5 207.5 L1047.5 456.5 L1048.5 456.5 L1048.5 432.5 L1049.5 432.5 L1049.5 400.5 L1050.5 399.5 L1050.5 397.5 L1051.5 396.5 L1053.5 395.5 L1054.5 395.5 L1054.5 221.5 L1055.5 221.5 L1055.5 210.5 L1056.5 209.5 L1058.5 208.5 L1059.5 207.5 L1060.5 207.5 L1060.5 456.5 L1061.5 456.5 L1061.5 401.5 L1062.5 401.5 L1062.5 400.5 L1063.5 399.5 L1063.5 397.5 L1064.5 396.5 L1065.5 395.5 L1066.5 395.5 L1066.5 228.5 L1067.5 228.5 L1067.5 210.5 L1068.5 209.5 L1070.5 208.5 L1071.5 207.5 L1072.5 207.5 L1072.5 456.5 L1073.5 456.5 L1073.5 405.5 L1074.5 405.5 L1074.5 400.5 L1075.5 399.5 L1075.5 397.5 L1076.5 396.5 L1078.5 395.5 L1079.5 395.5 L1079.5 211.5 L1080.5 210.5 L1081.5 209.5 L1083.5 208.5 L1084.5 207.5 L1085.5 207.5 L1085.5 456.5 L1086.5 456.5 L1086.5 405.5 L1087.5 405.5 L1087.5 400.5 L1088.5 399.5 L1088.5 397.5 L1089.5 396.5 L1090.5 395.5 L1091.5 395.5 L1091.5 255.5 L1092.5 255.5 L1092.5 210.5 L1093.5 209.5 L1095.5 208.5 L1096.5 207.5 L1097.5 207.5 L1097.5 456.5 L1098.5 456.5 L1098.5 404.5 L1099.5 404.5 L1099.5 400.5 L1100.5 399.5 L1100.5 397.5 L1101.5 396.5 L1104.5 395.5 L1105.5 395.5 L1105.5 285.5 L1106.5 285.5 L1106.5 210.5 L1107.5 209.5 L1108.5 208.5 L1109.5 207.5 L1110.5 207.5 L1110.5 456.5 L1111.5 456.5 L1111.5 432.5 L1112.5 432.5 L1112.5 400.5 L1113.5 399.5 L1113.5 397.5 L1114.5 396.5 L1115.5 395.5 L1116.5 395.5 L1116.5 320.5 L1117.5 320.5 L1117.5 210.5 L1118.5 209.5 L1120.5 208.5 L1121.5 207.5 L1122.5 207.5 L1122.5 456.5 L1123.5 456.5 L1123.5 400.5 L1124.5 400.5 L1124.5 400.5 L1125.5 399.5 L1125.5 397.5 L1126.5 396.5 L1129.5 395.5 L1130.5 395.5 L1130.5 262.5 L1131.5 262.5 L1131.5 210.5 L1132.5 209.5 L1133.5 208.5 L1134.5 207.5 L1135.5 207.5 L1135.5 456.5 L1136.5 456.5 L1136.5 400.5 L1137.5 400.5 L1137.5 400.5 L1138.5 399.5 L1138.5 397.5 L1139.5 396.5 L1140.5 395.5 L1141.5 395.5 L1141.5 262.5 L1142.5 262.5 L1142.5 210.5 L1143.5 209.5 L1145.5 208.5 L1146.5 207.5 L1147.5 207.5 L1147.5 456.5 L1148.5 456.5 L1148.5 400.5 L1149.5 400.5 L1149.5 400.5 L1150.5 399.5 L1150.5 397.5 L1151.5 396.5 L1154.5 395.5 L1155.5 395.5 L1155.5 228.5 L1156.5 228.5 L1156.5 210.5 L1157.5 209.5 L1158.5 208.5 L1159.5 207.5 L1160.5 207.5 L1160.5 456.5 L1161.5 456.5 L1161.5 404.5" stroke="#00f400" stroke-width="1" fill="none" stroke-linejoin="miter" shape-rendering="crispEdges"/>
</svg></div>
<div id="ascwin">
<svg class="sch" width="1193" height="357" viewBox="3 499 1193 357">
<defs>
<linearGradient id="gAct" gradientUnits="userSpaceOnUse" x1="0" y1="500" x2="0" y2="538"><stop offset="0" stop-color="#99b4d1"/><stop offset="1" stop-color="#b9d1ea"/></linearGradient>
<linearGradient id="gBtnA" x1="0" y1="0" x2="0" y2="1"><stop offset="0" stop-color="#c0d4ea"/><stop offset="0.41" stop-color="#b6cde6"/><stop offset="0.43" stop-color="#95b1d1"/><stop offset="0.8" stop-color="#9bb7d6"/><stop offset="1" stop-color="#adc6e1"/></linearGradient>
<linearGradient id="gBtnR" x1="0" y1="0" x2="0" y2="1"><stop offset="0" stop-color="#eaa99b"/><stop offset="0.41" stop-color="#dc8a78"/><stop offset="0.43" stop-color="#bd4228"/><stop offset="0.75" stop-color="#c24a30"/><stop offset="1" stop-color="#d4826a"/></linearGradient>
<linearGradient id="gGlyph2" x1="0" y1="0" x2="0" y2="1"><stop offset="0" stop-color="#ffffff"/><stop offset="1" stop-color="#d6d6d6"/></linearGradient>
<linearGradient id="gSheen" gradientUnits="userSpaceOnUse" x1="0" y1="560" x2="0" y2="660"><stop offset="0" stop-color="#dce8f5" stop-opacity="0"/><stop offset="0.3" stop-color="#dce8f5" stop-opacity="1"/><stop offset="0.62" stop-color="#dce8f5" stop-opacity="1"/><stop offset="0.66" stop-color="#dce8f5" stop-opacity="0.25"/><stop offset="1" stop-color="#dce8f5" stop-opacity="0"/></linearGradient>
</defs>
<rect x="3" y="499" width="1193" height="357" fill="#b9d1ea"/>
<path d="M3.5 540 V505 Q3.5 499.5 9 499.5 H1190 Q1195.5 499.5 1195.5 505 V540 Z" fill="url(#gAct)"/>
<rect x="3" y="537" width="1193" height="319" fill="#b9d1ea"/>
<path d="M1194.5 505 V853.5 H4.5" fill="none" stroke="#28d0ea" stroke-width="1"/>
<path d="M3.5 855 V505 Q3.5 499.5 9 499.5 H1190 Q1195.5 499.5 1195.5 505 V854.5 H3.5" fill="none" stroke="#000" stroke-width="1"/>
<rect x="3" y="854" width="1193" height="2" fill="#000"/>
<rect x="3" y="499" width="1193" height="1" fill="#ffffff"/>
<path d="M3 499 H8 Q3.5 500 3 505 Z" fill="#000"/><path d="M1196 499 H1191 Q1195.5 500 1196 505 Z" fill="#000"/>
<rect x="5" y="560" width="7" height="100" fill="url(#gSheen)"/><rect x="1188" y="560" width="6" height="100" fill="url(#gSheen)"/>
<g transform="translate(16 511)" stroke="#0000ff" fill="none"><path d="M0 9.6 H5" stroke-width="1.3"/><path d="M5.6 4.4 V15" stroke-width="3"/><path d="M7 6 L13.2 0.6" stroke-width="1.2"/><path d="M7 13.2 L14 20" stroke-width="1.2"/><path d="M9.6 14.4 L12.8 18.6 L8.8 17.6 Z" fill="#0000ff" stroke-width="1.4"/></g>
<text x="38" y="526.8" font-size="15.4" fill="#000" style="font-family:'Liberation Sans',sans-serif;font-weight:normal" textLength="71.6" lengthAdjust="spacingAndGlyphs">astable.asc</text>
<rect x="1055.7" y="509.6" width="40.4" height="22.4" rx="2.6" fill="url(#gBtnA)" stroke="#56697f" stroke-width="1.1"/><rect x="1056.8" y="510.70000000000005" width="38.199999999999996" height="20.2" rx="1.6" fill="none" stroke="#ffffff" stroke-opacity="0.5" stroke-width="1"/><rect x="1067.50" y="518.70" width="16.2" height="5.3" rx="0.9" fill="url(#gGlyph2)" stroke="#414b5e" stroke-width="1.1"/>
<rect x="1099.7" y="509.6" width="40.4" height="22.4" rx="2.6" fill="url(#gBtnA)" stroke="#56697f" stroke-width="1.1"/><rect x="1100.8" y="510.70000000000005" width="38.199999999999996" height="20.2" rx="1.6" fill="none" stroke="#ffffff" stroke-opacity="0.5" stroke-width="1"/><path d="M1111.50 513.30 H1127.70 V527.50 H1111.50 Z M1115.50 517.20 V523.60 H1123.70 V517.20 Z" fill="url(#gGlyph2)" fill-rule="evenodd" stroke="#414b5e" stroke-width="1.1" stroke-linejoin="round"/>
<rect x="1143.8" y="509.6" width="40.4" height="22.4" rx="2.6" fill="url(#gBtnR)" stroke="#4a1020" stroke-width="1.1"/><rect x="1144.8999999999999" y="510.70000000000005" width="38.199999999999996" height="20.2" rx="1.6" fill="none" stroke="#ffffff" stroke-opacity="0.5" stroke-width="1"/><path d="M1155.30 513.30 L1160.10 513.30 L1163.70 517.60 L1167.30 513.30 L1172.10 513.30 L1172.10 515.80 L1167.90 520.40 L1172.10 525.00 L1172.10 527.50 L1167.30 527.50 L1163.70 523.20 L1160.10 527.50 L1155.30 527.50 L1155.30 525.00 L1159.50 520.40 L1155.30 515.80 Z" fill="url(#gGlyph2)" stroke="#3e4658" stroke-width="1.2" stroke-linejoin="round"/>
<rect x="12" y="537" width="1175" height="309" fill="#ffffff"/>
<rect x="14" y="844" width="1172" height="1" fill="#e6e6e6"/>
<rect x="12" y="537" width="1174" height="1" fill="#696969"/>
<rect x="12" y="537" width="1" height="308" fill="#e6ebf1"/>
<rect x="13" y="537" width="1" height="307" fill="#6a6a6a"/>
<rect x="14" y="538" width="1171" height="306" fill="#c0c0c0"/>
<path d="M346.5 576 V547.5 H795.5 V564.3" stroke="#0000ff" stroke-width="1" fill="none" shape-rendering="crispEdges"/>
<path d="M461.5 547.5 V564.3" stroke="#0000ff" stroke-width="1" fill="none" shape-rendering="crispEdges"/>
<path d="M346.5 620.8 V651.3" stroke="#0000ff" stroke-width="1" fill="none" shape-rendering="crispEdges"/>
<path d="M461.5 610 V697.5" stroke="#0000ff" stroke-width="1" fill="none" shape-rendering="crispEdges"/>
<path d="M461.5 628.5 H599.5 L645.5 731.5 H665.5" stroke="#0000ff" stroke-width="1" fill="none" shape-rendering="crispEdges"/>
<path d="M795.5 628.5 H645.5 L599.5 731.5 H579.5" stroke="#0000ff" stroke-width="1" fill="none" shape-rendering="crispEdges"/>
<path d="M518.5 628.5 V645.3 M518.5 691.3 V731.5" stroke="#0000ff" stroke-width="1" fill="none" shape-rendering="crispEdges"/>
<path d="M703.5 628.5 V645.3 M703.5 691.3 V731.5" stroke="#0000ff" stroke-width="1" fill="none" shape-rendering="crispEdges"/>
<path d="M795.5 610 V697.5" stroke="#0000ff" stroke-width="1" fill="none" shape-rendering="crispEdges"/>
<path d="M495.5 731.5 H573.5" stroke="#0000ff" stroke-width="1" fill="none" shape-rendering="crispEdges"/>
<path d="M671.5 731.5 H760.5" stroke="#0000ff" stroke-width="1" fill="none" shape-rendering="crispEdges"/>
<path d="M461.5 766.3 V777 M795.5 766.3 V777" stroke="#0000ff" stroke-width="1" fill="none" shape-rendering="crispEdges"/>
<path d="M333.3 651.3 H359.7 L346.5 664.6999999999999 Z" stroke="#0000ff" stroke-width="1" fill="none" shape-rendering="crispEdges"/>
<path d="M448.3 777 H474.7 L461.5 790.4 Z" stroke="#0000ff" stroke-width="1" fill="none" shape-rendering="crispEdges"/>
<path d="M782.3 777 H808.7 L795.5 790.4 Z" stroke="#0000ff" stroke-width="1" fill="none" shape-rendering="crispEdges"/>
<path d="M461.5 564.3 L473.3 569.8 L449.9 581.5999999999999 L473.3 593.1999999999999 L449.9 604.5999999999999 L461.5 610.3" stroke="#0000a8" stroke-width="1" fill="none" shape-rendering="crispEdges" />
<path d="M795.5 564.3 L807.3 569.8 L783.9 581.5999999999999 L807.3 593.1999999999999 L783.9 604.5999999999999 L795.5 610.3" stroke="#0000a8" stroke-width="1" fill="none" shape-rendering="crispEdges" />
<path d="M518.5 645.3 L530.3 650.8 L506.9 662.5999999999999 L530.3 674.1999999999999 L506.9 685.5999999999999 L518.5 691.3" stroke="#0000a8" stroke-width="1" fill="none" shape-rendering="crispEdges" />
<path d="M703.5 645.3 L715.3 650.8 L691.9 662.5999999999999 L715.3 674.1999999999999 L691.9 685.5999999999999 L703.5 691.3" stroke="#0000a8" stroke-width="1" fill="none" shape-rendering="crispEdges" />
<circle cx="346.5" cy="598.5" r="22.4" fill="none" stroke="#0000a8" stroke-width="1"/>
<path d="M340.5 585 H352.5 M346.5 579 V591 M340.5 613.3 H352.5" stroke="#0000a8" stroke-width="1" fill="none" shape-rendering="crispEdges" />
<path d="M573.5 720 V743.7 M579.5 720 V743.7" stroke="#0000a8" stroke-width="1" fill="none" shape-rendering="crispEdges" />
<path d="M665.5 720 V743.7 M671.5 720 V743.7" stroke="#0000a8" stroke-width="1" fill="none" shape-rendering="crispEdges" />
<path d="M495.5 708 V754.7 M461.5 697.5 L495.5 719.7 M495.5 744.2 L461.5 766.3" stroke="#0000a8" stroke-width="1" fill="none" shape-rendering="crispEdges" />
<path d="M461.5 766.3 L475.3 751.3 L481.7 757 Z" stroke="#0000a8" stroke-width="1" fill="none" shape-rendering="crispEdges" />
<path d="M760.5 708 V754.7 M795.5 697.5 L760.5 719.7 M760.5 744.2 L795.5 766.3" stroke="#0000a8" stroke-width="1" fill="none" shape-rendering="crispEdges" />
<path d="M795.5 766.3 L780.3 751.3 L775.3 757 Z" stroke="#0000a8" stroke-width="1" fill="none" shape-rendering="crispEdges" />
<rect x="458.0" y="544.0" width="7" height="7" fill="#0000ff"/>
<rect x="458.0" y="625.0" width="7" height="7" fill="#0000ff"/>
<rect x="515.0" y="625.0" width="7" height="7" fill="#0000ff"/>
<rect x="700.0" y="625.0" width="7" height="7" fill="#0000ff"/>
<rect x="792.0" y="625.0" width="7" height="7" fill="#0000ff"/>
<rect x="515.0" y="728.0" width="7" height="7" fill="#0000ff"/>
<rect x="700.0" y="728.0" width="7" height="7" fill="#0000ff"/>
<text x="363.3" y="576.7" font-size="16" textLength="20" lengthAdjust="spacingAndGlyphs" stroke="#000" stroke-width="0.35">V1</text>
<text x="363.7" y="634.3" font-size="16" textLength="9.4" lengthAdjust="spacingAndGlyphs" stroke="#000" stroke-width="0.35">5</text>
<text x="475.3" y="582.5" font-size="16" textLength="20.6" lengthAdjust="spacingAndGlyphs" stroke="#000" stroke-width="0.35">R1</text>
<text x="475.8" y="608.5" font-size="16" textLength="20" lengthAdjust="spacingAndGlyphs" stroke="#000" stroke-width="0.35">2K</text>
<text x="809.2" y="582.5" font-size="16" textLength="21.6" lengthAdjust="spacingAndGlyphs" stroke="#000" stroke-width="0.35">R2</text>
<text x="809.5" y="608.5" font-size="16" textLength="20.4" lengthAdjust="spacingAndGlyphs" stroke="#000" stroke-width="0.35">2K</text>
<text x="533.4" y="662.5" font-size="16" textLength="20.6" lengthAdjust="spacingAndGlyphs" stroke="#000" stroke-width="0.35">R3</text>
<text x="533.4" y="688.3" font-size="16" textLength="165" lengthAdjust="spacingAndGlyphs" stroke="#000" stroke-width="0.35">100.000000000001K</text>
<text x="717.5" y="662.5" font-size="16" textLength="20.8" lengthAdjust="spacingAndGlyphs" stroke="#000" stroke-width="0.35">R4</text>
<text x="717.5" y="688.3" font-size="16" textLength="40" lengthAdjust="spacingAndGlyphs" stroke="#000" stroke-width="0.35">100K</text>
<text x="445.3" y="726.7" font-size="16" textLength="21.4" lengthAdjust="spacingAndGlyphs" stroke="#000" stroke-width="0.35">Q2</text>
<text x="405.8" y="752.8" font-size="16" textLength="60.9" lengthAdjust="spacingAndGlyphs" stroke="#000" stroke-width="0.35">2N3904</text>
<text x="789.2" y="726.7" font-size="16" textLength="20.8" lengthAdjust="spacingAndGlyphs" stroke="#000" stroke-width="0.35">Q1</text>
<text x="790" y="752.8" font-size="16" textLength="60.8" lengthAdjust="spacingAndGlyphs" stroke="#000" stroke-width="0.35">2N3904</text>
<text x="565.3" y="715.8" font-size="16" textLength="19.4" lengthAdjust="spacingAndGlyphs" stroke="#000" stroke-width="0.35">C1</text>
<text x="657.5" y="715.8" font-size="16" textLength="20" lengthAdjust="spacingAndGlyphs" stroke="#000" stroke-width="0.35">C2</text>
<text x="558.3" y="759.2" font-size="16" textLength="34.2" lengthAdjust="spacingAndGlyphs" stroke="#000" stroke-width="0.35">.01µ</text>
<text x="650.3" y="759.2" font-size="16" textLength="34.2" lengthAdjust="spacingAndGlyphs" stroke="#000" stroke-width="0.35">.01µ</text>
<text x="720.6" y="818.6" font-size="16" textLength="151.8" lengthAdjust="spacingAndGlyphs" stroke="#000" stroke-width="0.35">.tran 100m startup</text>
<text x="424.4" y="833.6" font-size="11.3" style="fill:#0000c8" textLength="452.6" lengthAdjust="spacingAndGlyphs">This example schematic is supplied for informational/educational purposes only.</text>
</svg></div>
<div id="statusbar">
<svg width="1199" height="40" viewBox="0 856 1199 40">
  <rect x="0" y="856" width="1199" height="2" fill="#ffffff"/>
  <rect x="0" y="858" width="1199" height="37" fill="#f0f0f0"/>
  <rect x="1" y="858" width="1197" height="1" fill="#dcdcdc"/>
  <rect x="1174" y="860" width="1" height="34" fill="#c8c8c8"/>
  <g fill="#bababa">
    <rect x="1193" y="882" width="3" height="3"/>
    <rect x="1189" y="886" width="3" height="3"/><rect x="1193" y="886" width="3" height="3"/>
    <rect x="1185" y="890" width="3" height="3"/><rect x="1189" y="890" width="3" height="3"/><rect x="1193" y="890" width="3" height="3"/>
  </g>
</svg>
</div>

<div id="edges" style="left:0;top:0;width:1199px;height:896px;pointer-events:none;background:transparent;">
<svg width="1199" height="896" viewBox="0 0 1199 896">
  <!-- outer window border -->
  <rect x="0" y="0" width="1199" height="1" fill="#6e6e6e"/>
  <rect x="0" y="0" width="1" height="896" fill="#3a3a34"/>
  <rect x="1198" y="0" width="1" height="896" fill="#2a2a2a"/>
  
  <rect x="0" y="895" width="1199" height="1" fill="#6a6a6a"/>
  <!-- MDI sunken edge -->
  <rect x="1" y="111" width="1" height="745" fill="#626262"/>
  <rect x="2" y="141" width="1" height="715" fill="#505050"/><rect x="2" y="111" width="1" height="30" fill="#b8b8b8"/>
  <rect x="2" y="141" width="1194" height="1" fill="#4a4a4a"/><rect x="3" y="498" width="1193" height="1" fill="#262626"/>
  <rect x="1196" y="112" width="2" height="745" fill="#ffffff"/>
</svg>
</div>

</div>
</body>
</html>
